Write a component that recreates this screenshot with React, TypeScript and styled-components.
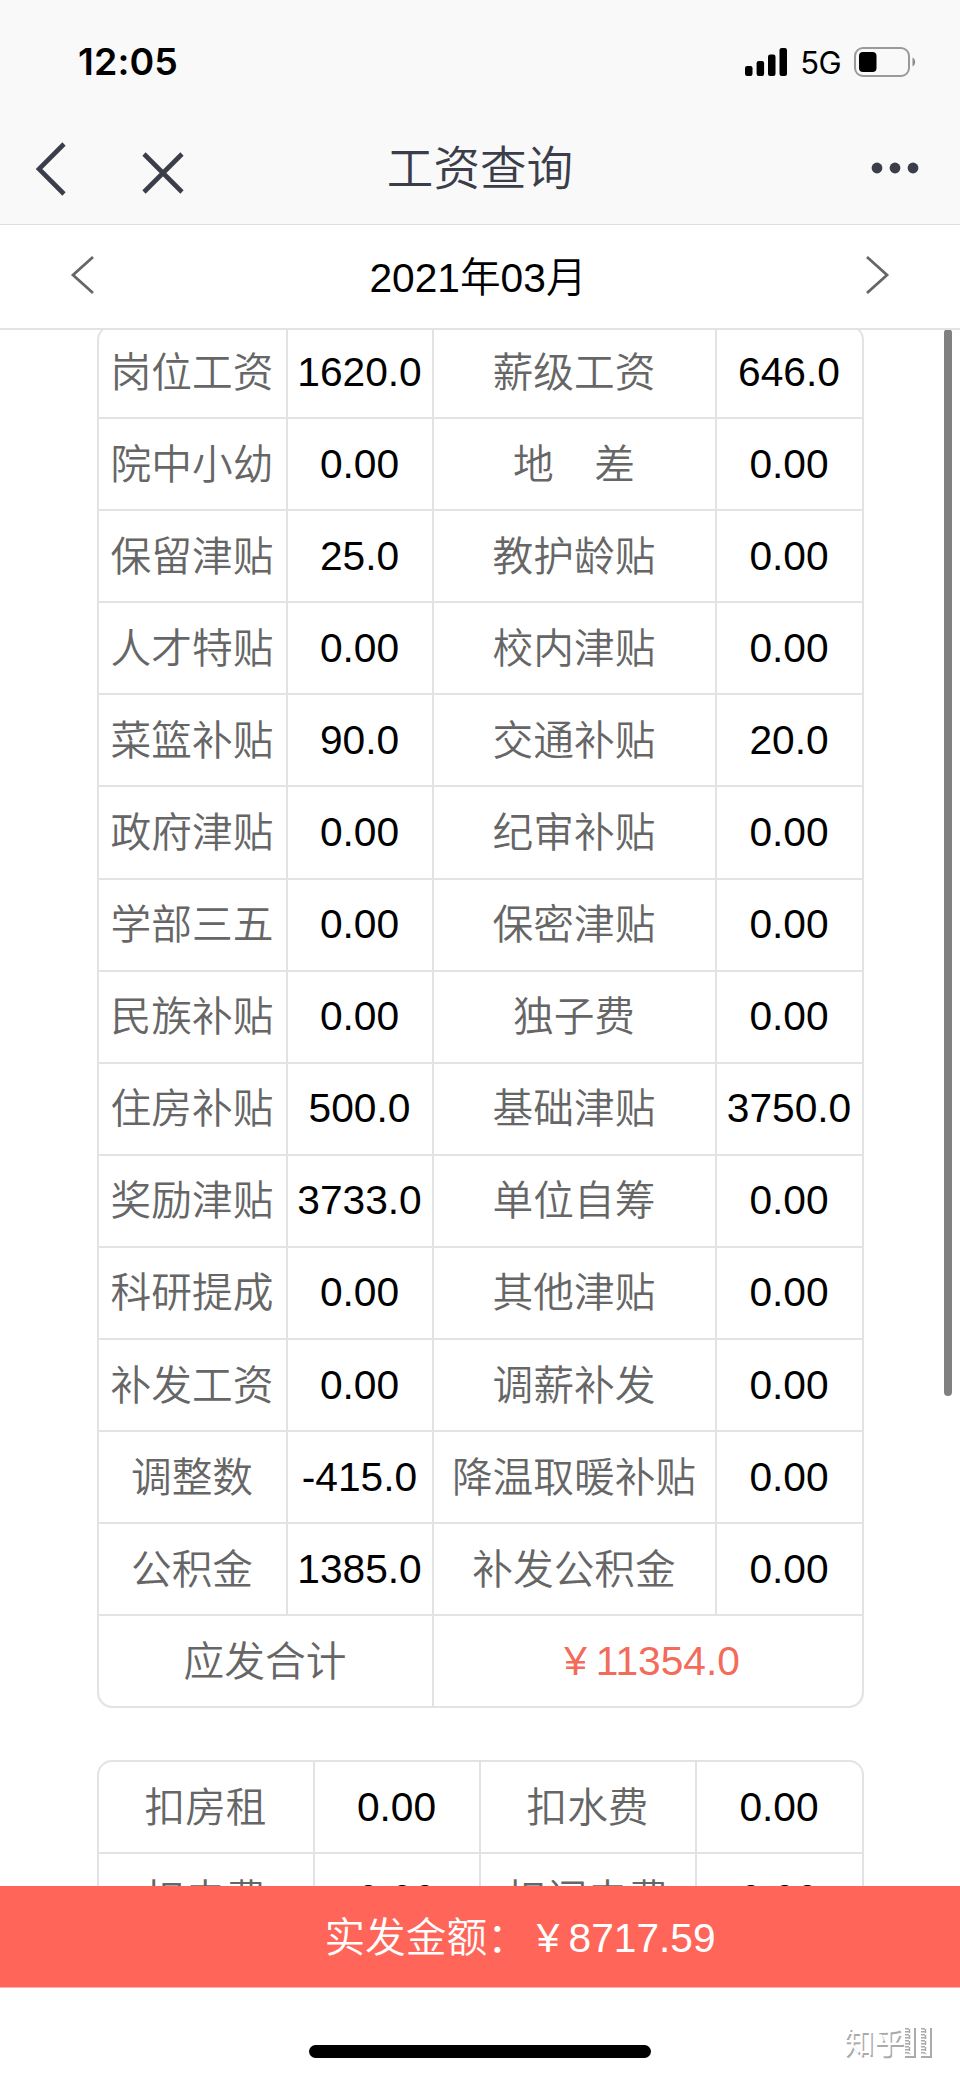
import React from "react";
import styled, { createGlobalStyle } from "styled-components";

const LINE = "#e3e3e6";

const GlobalStyle = createGlobalStyle`
  * { box-sizing: border-box; }
  body {
    margin: 0;
    background: #fff;
    font-family: "Liberation Sans", "Noto Sans CJK SC", sans-serif;
    color: #000;
    overflow: hidden;
  }
`;

const Screen = styled.div`
  width: 960px;
  height: 2078px;
  display: flex;
  flex-direction: column;
  background: #fff;
  overflow: hidden;
`;

const TopArea = styled.header`
  flex: none;
  height: 225px;
  background: #f9f9f9;
  border-bottom: 1px solid #dedede;
`;

const StatusBar = styled.div`
  display: flex;
  align-items: center;
  justify-content: space-between;
  height: 112px;
  padding: 11px 44px 0 78px;
`;

const Clock = styled.span`
  font: 600 37.5px/44px Inter, sans-serif;
  letter-spacing: 0.1px;
`;

const StatusIcons = styled.div`
  display: flex;
  align-items: center;
  height: 44px;
`;

const Network = styled.span`
  margin: 2px 13px 0 12px;
  font: 400 31px/36px Inter, sans-serif;
  letter-spacing: -0.6px;
`;

const NavBar = styled.div`
  display: grid;
  grid-template-columns: 240px 1fr 240px;
  align-items: center;
  height: 112px;
  color: #3b3e4a;
`;

const NavLeft = styled.div`
  display: flex;
  align-items: flex-end;
  gap: 75px;
  padding: 2px 0 0 34px;
`;

const NavRight = styled.div`
  display: flex;
  justify-content: flex-end;
  padding-right: 41px;
`;

const Title = styled.h1`
  margin: 2px 0 0;
  text-align: center;
  font-size: 46.6px;
  line-height: 60px;
  font-weight: 350;
`;

const MonthBar = styled.div`
  flex: none;
  display: flex;
  align-items: center;
  justify-content: space-between;
  height: 105px;
  padding: 0 70px 4px;
  border-bottom: 2px solid ${LINE};
`;

const Month = styled.span`
  padding: 7px 4px 0 0;
  font-size: 40.7px;
  line-height: 60px;
  font-weight: 350;
`;

const Content = styled.main`
  position: relative;
  flex: none;
  height: 1556px;
  padding: 0 96px 0 97px;
  overflow: hidden;
`;

const Sheet = styled.section<{ $columns: string; $top: number }>`
  display: grid;
  grid-template-columns: ${(p) => p.$columns};
  grid-auto-rows: 92.1px;
  margin-top: ${(p) => p.$top}px;
  border: 2px solid ${LINE};
  border-bottom-width: 0;
  border-radius: 15px;
  overflow: hidden;
  box-shadow: inset 0 -2px 0 ${LINE};
`;

const Cell = styled.div<{ $tone?: "label" | "value" | "total"; $span?: number; $last?: boolean }>`
  grid-column: span ${(p) => p.$span ?? 1};
  display: flex;
  align-items: center;
  justify-content: center;
  padding: ${(p) => (p.$tone === "label" ? "1px 1px 0 0" : "0 1px 1px 0")};
  border-right: ${(p) => (p.$last ? "0" : `2px solid ${LINE}`)};
  border-bottom: 2px solid ${LINE};
  font-size: 40.7px;
  font-weight: ${(p) => (p.$tone === "label" ? 350 : 400)};
  line-height: 60px;
  white-space: pre;
  color: ${(p) => (p.$tone === "label" ? "#666" : p.$tone === "total" ? "#f26b5b" : "#000")};
`;

const ScrollThumb = styled.div`
  position: absolute;
  top: -1px;
  right: 8px;
  width: 8px;
  height: 1067px;
  border-radius: 4px;
  background: #808080;
`;

const NetPay = styled.div`
  flex: none;
  height: 102px;
  padding-left: 80px;
  background: #ff6659;
  border-bottom: 1px solid #ffb5ae;
  color: #fff;
  font-size: 40.7px;
  font-weight: 350;
  line-height: 105px;
  text-align: center;
  white-space: pre;
`;

const Yen = styled.span`
  display: inline-block;
  width: 40.7px;
  text-align: center;
`;

const Footer = styled.footer`
  position: relative;
  flex: 1;
  display: flex;
  justify-content: center;
  padding-top: 57px;
`;

const HomeIndicator = styled.div`
  width: 342px;
  height: 13px;
  border-radius: 7px;
  background: #000;
`;

const Watermark = styled.div`
  position: absolute;
  right: 24px;
  top: 35px;
  display: flex;
  align-items: center;
  font-size: 30px;
  line-height: 40px;
  color: #fff;
  text-shadow: 1.5px 1.5px 0 #aaa;
`;

type Row = [string, string, string, string];

const earnings: Row[] = [
  ["岗位工资", "1620.0", "薪级工资", "646.0"],
  ["院中小幼", "0.00", "地　差", "0.00"],
  ["保留津贴", "25.0", "教护龄贴", "0.00"],
  ["人才特贴", "0.00", "校内津贴", "0.00"],
  ["菜篮补贴", "90.0", "交通补贴", "20.0"],
  ["政府津贴", "0.00", "纪审补贴", "0.00"],
  ["学部三五", "0.00", "保密津贴", "0.00"],
  ["民族补贴", "0.00", "独子费", "0.00"],
  ["住房补贴", "500.0", "基础津贴", "3750.0"],
  ["奖励津贴", "3733.0", "单位自筹", "0.00"],
  ["科研提成", "0.00", "其他津贴", "0.00"],
  ["补发工资", "0.00", "调薪补发", "0.00"],
  ["调整数", "-415.0", "降温取暖补贴", "0.00"],
  ["公积金", "1385.0", "补发公积金", "0.00"],
];

const deductions: Row[] = [
  ["扣房租", "0.00", "扣水费", "0.00"],
  ["扣电费", "0.00", "扣闭电费", "0.00"],
];

const Rows = ({ rows }: { rows: Row[] }) => (
  <>
    {rows.map((row) =>
      row.map((text, i) => (
        <Cell key={row[0] + i} $tone={i % 2 ? "value" : "label"} $last={i === 3}>
          {text}
        </Cell>
      ))
    )}
  </>
);

const Signal = () => (
  <svg width="43" height="28" viewBox="0 0 43 28">
    <rect x="0" y="18" width="7.5" height="10" rx="2.2" />
    <rect x="11.6" y="13" width="7.5" height="15" rx="2.2" />
    <rect x="23" y="6.5" width="7.5" height="21.5" rx="2.2" />
    <rect x="34.5" y="0" width="7.5" height="28" rx="2.2" />
  </svg>
);

const Battery = () => (
  <svg width="62" height="30" viewBox="0 0 62 30">
    <rect x="1" y="1" width="54" height="28" rx="8" fill="none" stroke="#9a9a9a" strokeWidth="2" />
    <rect x="5" y="5" width="17.5" height="20" rx="4" />
    <path d="M58.500 10.500c3.500 1.500 3.500 7.500 0 9z" fill="#8c8c8c" />
  </svg>
);

const BackIcon = () => (
  <svg width="33" height="54" viewBox="0 0 33 54" fill="none" stroke="currentColor" strokeWidth="4.6">
    <path d="M30 2L5 27l25 25" />
  </svg>
);

const CloseIcon = () => (
  <svg width="42" height="44" viewBox="0 0 42 44" fill="none" stroke="currentColor" strokeWidth="4.6">
    <path d="M2 2l38 38M40 2L2 40" />
  </svg>
);

const MoreIcon = () => (
  <svg width="48" height="12" viewBox="0 0 48 12" fill="currentColor">
    <circle cx="6" cy="6" r="5.4" />
    <circle cx="24" cy="6" r="5.4" />
    <circle cx="42" cy="6" r="5.4" />
  </svg>
);

const Arrow = ({ next }: { next?: boolean }) => (
  <svg width="25" height="40" viewBox="0 0 25 40" fill="none" stroke="#666" strokeWidth="2.8">
    <path d={next ? "M2 2l20 18L2 38" : "M23 2L3 20l20 18"} />
  </svg>
);

const MissingGlyph = () => (
  <svg width="16" height="32" viewBox="0 0 16 32" fill="none" stroke="#aaa">
    <path d="M1 30h10V1" strokeWidth="2" />
    <path d="M3 1v27" strokeWidth="4" strokeDasharray="1.5 1.5" />
    <path d="M5.5 2v25" strokeWidth="1.5" strokeDasharray="4 2" />
  </svg>
);

export default function App() {
  return (
    <Screen>
      <GlobalStyle />
      <TopArea>
        <StatusBar>
          <Clock>12:05</Clock>
          <StatusIcons>
            <Signal />
            <Network>5G</Network>
            <Battery />
          </StatusIcons>
        </StatusBar>
        <NavBar>
          <NavLeft>
            <BackIcon />
            <CloseIcon />
          </NavLeft>
          <Title>工资查询</Title>
          <NavRight>
            <MoreIcon />
          </NavRight>
        </NavBar>
      </TopArea>
      <MonthBar>
        <Arrow />
        <Month>2021年03月</Month>
        <Arrow next />
      </MonthBar>
      <Content>
        <Sheet $columns="189px 146px 283px 1fr" $top={-5}>
          <Rows rows={earnings} />
          <Cell $tone="label" $span={2}>应发合计</Cell>
          <Cell $tone="total" $span={2} $last>
            <span><Yen>¥</Yen>11354.0</span>
          </Cell>
        </Sheet>
        <Sheet $columns="216px 166px 216px 1fr" $top={51.9}>
          <Rows rows={deductions} />
        </Sheet>
        <ScrollThumb />
      </Content>
      <NetPay>实发金额：<Yen>¥</Yen>8717.59</NetPay>
      <Footer>
        <HomeIndicator />
        <Watermark>
          知乎
          <MissingGlyph />
          <MissingGlyph />
        </Watermark>
      </Footer>
    </Screen>
  );
}
